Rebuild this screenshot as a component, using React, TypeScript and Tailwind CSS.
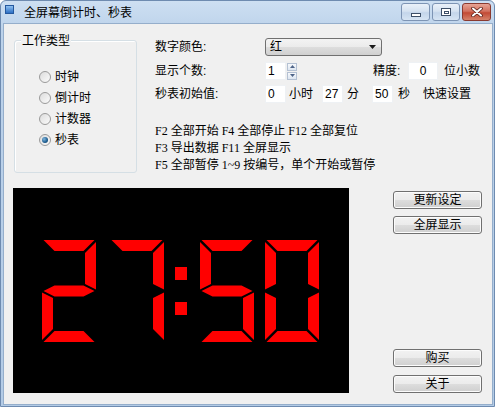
import React from "react";

// seven segment geometry
const W = 54;
const H = 102;
const T = 11;
const G = 1.5;
const M = H / 2;

const SEG: Record<string, string> = {
  a: `${G},0 ${W - G},0 ${W - G - T},${T} ${G + T},${T}`,
  b: `${W},${G + 0.5} ${W},${M - G} ${W - T},${M - T / 2 - G} ${W - T},${T + G + 0.5}`,
  c: `${W},${M + G} ${W},${H - G - 0.5} ${W - T},${H - T - G - 0.5} ${W - T},${M + T / 2 + G}`,
  d: `${G + T},${H - T} ${W - G - T},${H - T} ${W - G},${H} ${G},${H}`,
  e: `0,${M + G} ${T},${M + T / 2 + G} ${T},${H - T - G - 0.5} 0,${H - G - 0.5}`,
  f: `0,${G + 0.5} ${T},${T + G + 0.5} ${T},${M - T / 2 - G} 0,${M - G}`,
  g: `${G},${M} ${T + G},${M - T / 2} ${W - T - G},${M - T / 2} ${W - G},${M} ${W - T - G},${M + T / 2} ${T + G},${M + T / 2}`,
};

const DIGITS: Record<string, string> = {
  "0": "abcdef",
  "2": "abged",
  "5": "afgcd",
  "7": "abc",
};

function Digit({ d, x }: { d: string; x: number }) {
  return (
    <g transform={`translate(${x},0)`}>
      {DIGITS[d].split("").map((s) => (
        <polygon key={s} points={SEG[s]} fill="#ff0000" />
      ))}
    </g>
  );
}

function Clock() {
  return (
    <svg width="278" height="102" viewBox="0 0 278 102">
      <Digit d="2" x={0} />
      <Digit d="7" x={68} />
      <rect x="133" y="27" width="12" height="13" fill="#ff0000" />
      <rect x="133" y="62" width="12" height="13" fill="#ff0000" />
      <Digit d="5" x={158} />
      <Digit d="0" x={223} />
    </svg>
  );
}

function Radio({ label, checked }: { label: string; checked?: boolean }) {
  return (
    <div className="flex h-[21px] items-center">
      <span className="flex h-[12px] w-[12px] items-center justify-center rounded-full border border-[#9a9a9a] bg-[linear-gradient(135deg,#dcdcdc,#fbfbfb)]">
        {checked && (
          <span className="h-[6px] w-[6px] rounded-full bg-[radial-gradient(circle_at_35%_35%,#7fb6de,#1e5d8f_60%,#163e60)]" />
        )}
      </span>
      <span className="ml-[4px] leading-[16px]">{label}</span>
    </div>
  );
}

function Edit({ value, w, center }: { value: string; w: string; center?: boolean }) {
  return (
    <div
      className={`flex h-[18px] ${w} items-center bg-white border border-[#eef1f4] ${center ? "justify-center" : "pl-[2px]"} leading-[16px]`}
    >
      {value}
    </div>
  );
}

function Button({ label }: { label: string }) {
  return (
    <div className="flex h-[18px] w-[89px] items-center justify-center rounded-[3px] border border-[#707070] bg-[linear-gradient(#f2f2f2_0%,#ebebeb_50%,#dddddd_51%,#cfcfcf_100%)] shadow-[inset_0_0_0_1px_#fcfcfc] leading-[16px]">
      {label}
    </div>
  );
}

function CaptionButton({ kind }: { kind: "min" | "max" | "close" }) {
  if (kind === "close") {
    return (
      <div className="flex h-[18px] w-[29px] items-center justify-center rounded-[3px] border border-[#8a3a30] bg-[linear-gradient(#e8a494_0%,#d2715f_45%,#c24a35_55%,#d5826a_100%)]">
        <svg width="12" height="10" viewBox="0 0 12 10">
          <path d="M2 1.5 L10 8.5 M10 1.5 L2 8.5" stroke="#5a2018" strokeWidth="3.6" strokeLinecap="round" />
          <path d="M2 1.5 L10 8.5 M10 1.5 L2 8.5" stroke="#ffffff" strokeWidth="2" strokeLinecap="round" />
        </svg>
      </div>
    );
  }
  return (
    <div
      className={`flex h-[18px] ${kind === "min" ? "w-[29px]" : "w-[28px]"} items-center justify-center rounded-[3px] border border-[#7d94b4] bg-[linear-gradient(#eaf1f9_0%,#d5e2f1_45%,#c3d5ea_55%,#d6e4f3_100%)]`}
    >
      {kind === "min" ? (
        <div className="mt-[6px] h-[4px] w-[10px] border border-[#3d4f68] bg-white" />
      ) : (
        <div className="flex h-[8px] w-[10px] items-center justify-center border border-[#3d4f68] bg-white">
          <div className="h-[3px] w-[5px] border border-[#3d4f68]" />
        </div>
      )}
    </div>
  );
}

export default function App() {
  return (
    <div className="h-[407px] w-[495px] overflow-hidden rounded-t-[6px] border border-[#6e8bb0] bg-[linear-gradient(#cddff2_0%,#bcd2ea_30px,#b3cbe6_100%)] font-['Liberation_Sans','Noto_Sans_CJK_SC',sans-serif] text-[12px] text-black">
      {/* title bar */}
      <div className="flex h-[23px] items-start">
        <div className="ml-[4px] mt-[4px] h-[9px] w-[9px] border border-[#24589e] bg-[linear-gradient(#8fc0f0,#2c6fc4)]" />
        <span className="ml-[10px] mt-[4px] leading-[16px]">全屏幕倒计时、秒表</span>
        <div className="ml-auto mr-[3px] mt-[2px] flex gap-[2px]">
          <CaptionButton kind="min" />
          <CaptionButton kind="max" />
          <CaptionButton kind="close" />
        </div>
      </div>

      {/* client */}
      <div className="ml-[3px] mr-[2px] flex h-[380px] flex-col bg-[#f0f0f0] shadow-[0_0_0_1px_#95aecb]">
        <div className="flex h-[164px]">
          {/* group box */}
          <div className="ml-[10px] mt-[16px] h-[133px] w-[123px] rounded-[3px] border border-[#d5dfe5] shadow-[inset_1px_1px_0_#ffffff]">
            <div className="-mt-[9px] ml-[6px] w-fit bg-[#f0f0f0] px-[1px] leading-[18px]">工作类型</div>
            <div className="mt-[16px] flex flex-col pl-[24px]">
              <Radio label="时钟" />
              <Radio label="倒计时" />
              <Radio label="计数器" />
              <Radio label="秒表" checked />
            </div>
          </div>

          {/* settings */}
          <div className="ml-[18px] mt-[14px] flex flex-col">
            <div className="flex h-[18px] items-center">
              <span className="w-[110px] leading-[16px]">数字颜色:</span>
              <div className="flex h-[18px] w-[117px] items-center rounded-[3px] border border-[#707070] bg-[linear-gradient(#f3f3f3_0%,#ebebeb_50%,#dddddd_51%,#d0d0d0_100%)] pl-[4px] pr-[5px] leading-[16px]">
                <span className="flex-1">红</span>
                <svg width="7" height="4" viewBox="0 0 7 4">
                  <path d="M0 0 H7 L3.5 4 Z" fill="#1a1a1a" />
                </svg>
              </div>
            </div>

            <div className="mt-[6px] flex h-[18px] items-center">
              <span className="w-[110px] leading-[16px]">显示个数:</span>
              <Edit value="1" w="w-[21px]" />
              <div className="ml-[1px] flex h-[17px] w-[10px] flex-col">
                <div className="flex h-[8px] items-center justify-center border border-[#b4c1d3] bg-[linear-gradient(#f7f9fc,#dde6f1)]">
                  <svg width="5" height="3" viewBox="0 0 5 3">
                    <path d="M0 3 H5 L2.5 0 Z" fill="#4e6488" />
                  </svg>
                </div>
                <div className="mt-[1px] flex h-[8px] items-center justify-center border border-[#b4c1d3] bg-[linear-gradient(#f7f9fc,#dde6f1)]">
                  <svg width="5" height="3" viewBox="0 0 5 3">
                    <path d="M0 0 H5 L2.5 3 Z" fill="#4e6488" />
                  </svg>
                </div>
              </div>
              <span className="ml-[76px] w-[35px] leading-[16px]">精度:</span>
              <Edit value="0" w="w-[30px]" center />
              <span className="ml-[6px] leading-[16px]">位小数</span>
            </div>

            <div className="mt-[5px] flex h-[18px] items-center">
              <span className="w-[110px] leading-[16px]">秒表初始值:</span>
              <Edit value="0" w="w-[21px]" />
              <span className="ml-[3px] w-[33px] leading-[16px]">小时</span>
              <Edit value="27" w="w-[21px]" />
              <span className="ml-[4px] w-[25px] leading-[16px]">分</span>
              <Edit value="50" w="w-[21px]" />
              <span className="ml-[5px] w-[25px] leading-[16px]">秒</span>
              <span className="leading-[16px]">快速设置</span>
            </div>

            <div className="mt-[20px] flex flex-col font-['Liberation_Serif','Noto_Sans_CJK_SC',serif] leading-[17px]">
              <span>F2 全部开始 F4 全部停止 F12 全部复位</span>
              <span>F3 导出数据 F11 全屏显示</span>
              <span>F5 全部暂停 1~9 按编号，单个开始或暂停</span>
            </div>
          </div>
        </div>

        <div className="flex h-[205px]">
          <div className="ml-[9px] flex h-[205px] w-[336px] items-center justify-center bg-black">
            <Clock />
          </div>
          <div className="ml-[44px] flex w-[89px] flex-col justify-between pt-[3px]">
            <div className="flex flex-col gap-[7px]">
              <Button label="更新设定" />
              <Button label="全屏显示" />
            </div>
            <div className="flex flex-col gap-[8px]">
              <Button label="购买" />
              <Button label="关于" />
            </div>
          </div>
        </div>
      </div>
    </div>
  );
}
